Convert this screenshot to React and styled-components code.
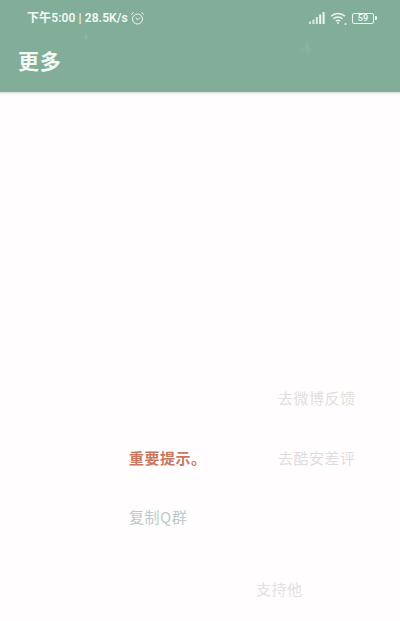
import React from "react";
import styled, { createGlobalStyle } from "styled-components";

const Global = createGlobalStyle`
  html, body { margin: 0; padding: 0; background: #fffdfe; }
  body { font-family: "Roboto", "Noto Sans CJK SC", sans-serif; }
  #root { width: 400px; height: 621px; overflow: hidden; }
`;

const Page = styled.div`
  width: 400px;
  height: 621px;
  display: flex;
  flex-direction: column;
  background: #fffdfe;
`;

const Header = styled.header`
  position: relative;
  height: 92px;
  flex: none;
  background: #82ae99;
  box-shadow: 0 1px 2px rgba(90, 120, 105, 0.3);
  color: #f4f8f5;
  display: flex;
  flex-direction: column;
`;

const StatusBar = styled.div`
  height: 36px;
  padding: 0 26px 0 27px;
  display: flex;
  align-items: center;
  justify-content: space-between;
`;

const StatusGroup = styled.div`
  display: flex;
  align-items: center;
  gap: ${(p) => p.$gap}px;
`;

const StatusText = styled.span`
  font-size: 12px;
  font-weight: 600;
  line-height: 14px;
  letter-spacing: 0.1px;
  white-space: nowrap;
  font-family: "Roboto", "Noto Sans CJK SC", sans-serif;
`;

const Title = styled.h1`
  margin: 7px 0 0 18px;
  font-size: 21px;
  line-height: 34px;
  font-weight: 700;
  letter-spacing: 0.8px;
  font-family: "Noto Sans CJK SC", sans-serif;
`;

const Sparkle = styled.svg`
  position: absolute;
  left: ${(p) => p.$x}px;
  top: ${(p) => p.$y}px;
`;

const Menu = styled.main`
  flex: 1;
  display: flex;
  flex-direction: column;
  justify-content: flex-end;
  padding-bottom: 20px;
`;

const Row = styled.div`
  display: grid;
  grid-template-columns: 149px 1fr;
  padding-left: ${(p) => p.$left ?? 129}px;
  margin-bottom: ${(p) => p.$gap ?? 0}px;
  height: 24px;
  align-items: center;
`;

const Item = styled.span`
  grid-column: ${(p) => p.$col};
  font-family: "Noto Sans CJK SC", sans-serif;
  font-size: 15px;
  line-height: 24px;
  letter-spacing: 0.5px;
  font-weight: ${(p) => p.$weight ?? 400};
  color: ${(p) => p.$color};
  white-space: nowrap;
`;

const Alarm = () => (
  <svg width="15" height="15" viewBox="0 0 15 15" fill="none" stroke="#eef4f0" strokeWidth="1">
    <circle cx="7.5" cy="8" r="5" />
    <path d="M6 6.5 7.5 9 10 6.5" />
    <path d="M1.2 3.6 3.6 1.4M13.8 3.6 11.4 1.4" />
  </svg>
);

const Signal = () => (
  <svg width="16" height="12" viewBox="0 0 16 12" fill="#eef4f0">
    <rect x="0" y="9.5" width="2" height="2.5" opacity="0.75" />
    <rect x="3.4" y="7.5" width="2" height="4.5" opacity="0.8" />
    <rect x="6.8" y="5" width="2" height="7" opacity="0.85" />
    <rect x="10.2" y="2.5" width="2" height="9.5" />
    <rect x="13.6" y="0" width="2" height="12" />
  </svg>
);

const Wifi = () => (
  <svg width="17" height="13" viewBox="0 0 17 13" fill="none" stroke="#eef4f0" strokeWidth="1.4">
    <path d="M1 4.2C5 .6 11 .6 15 4.2" />
    <path d="M3.4 6.8C6 4.4 10 4.4 12.6 6.8" />
    <path d="M5.8 9.2C7.2 8 8.8 8 10.2 9.2" />
    <circle cx="8" cy="11" r="0.9" fill="#eef4f0" stroke="none" />
    <circle cx="15.5" cy="12" r="1" fill="#eef4f0" stroke="none" />
  </svg>
);

const BatteryBox = styled.div`
  position: relative;
  width: 20px;
  height: 9px;
  border: 1px solid #eef4f0;
  border-radius: 2px;
  font-size: 9px;
  line-height: 9px;
  font-weight: 600;
  text-align: center;
  &::after {
    content: "";
    position: absolute;
    right: -3.5px;
    top: 2.5px;
    width: 2px;
    height: 4px;
    background: #eef4f0;
    border-radius: 0 1px 1px 0;
  }
`;

export default function App() {
  return (
    <Page>
      <Global />
      <Header>
        <StatusBar>
          <StatusGroup $gap={2}>
            <StatusText>下午5:00 | 28.5K/s</StatusText>
            <Alarm />
          </StatusGroup>
          <StatusGroup $gap={5}>
            <Signal />
            <Wifi />
            <BatteryBox>59</BatteryBox>
          </StatusGroup>
        </StatusBar>
        <Title>更多</Title>
        <Sparkle $x={80} $y={31} width="12" height="12" viewBox="0 0 14 14" fill="#89b49e">
          <path d="M7 1 8.5 6 13 7 8.5 8.5 7 13 5.5 8.5 1 7 5.5 6Z" />
        </Sparkle>
        <Sparkle $x={298} $y={38} width="18" height="20" viewBox="0 0 18 20" fill="#88b39c">
          <path d="M9 2 11 9 17 14 11 13 10 19 8 13 1 12 7 9Z" />
        </Sparkle>
      </Header>
      <Menu>
        <Row $gap={36}>
          <Item $col={2} $color="#dfdfdc">去微博反馈</Item>
        </Row>
        <Row $gap={35}>
          <Item $col={1} $weight={700} $color="#c9775f">重要提示。</Item>
          <Item $col={2} $color="#dfdcdc">去酷安差评</Item>
        </Row>
        <Row $gap={48}>
          <Item $col={1} $color="#bccaca">复制Q群</Item>
        </Row>
        <Row $left={256}>
          <Item $col={1} $color="#e2e0e2">支持他</Item>
        </Row>
      </Menu>
    </Page>
  );
}
